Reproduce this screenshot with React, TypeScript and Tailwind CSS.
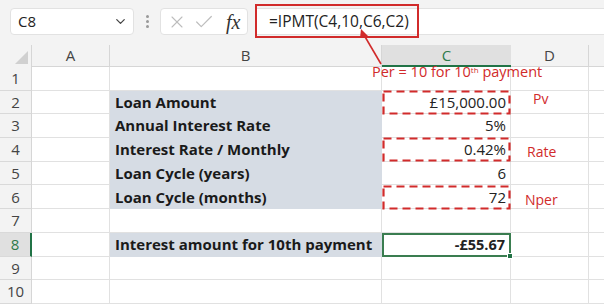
import { ChevronDown, X, Check } from "lucide-react";

const ROW_H = "h-[23.7px]";

const rows = [
  { n: 1, b: "", c: "", shade: false },
  { n: 2, b: "Loan Amount", c: "£15,000.00", shade: true },
  { n: 3, b: "Annual Interest Rate", c: "5%", shade: true },
  { n: 4, b: "Interest Rate / Monthly", c: "0.42%", shade: true },
  { n: 5, b: "Loan Cycle (years)", c: "6", shade: true },
  { n: 6, b: "Loan Cycle (months)", c: "72", shade: true },
  { n: 7, b: "", c: "", shade: false },
  { n: 8, b: "Interest amount for 10th payment", c: "-£55.67", shade: true },
  { n: 9, b: "", c: "", shade: false },
  { n: 10, b: "", c: "", shade: false },
];

const cellFont = { fontFamily: "'Open Sans', 'Liberation Sans', sans-serif" };

function DashedBox({ top }: { top: number }) {
  return (
    <svg
      className="absolute left-[382px] w-[129px] h-[25px] pointer-events-none"
      style={{ top }}
      viewBox="0 0 129 25"
    >
      <rect x="1.5" y="1.5" width="126" height="22" fill="none" stroke="#d12b2b" strokeWidth="2.2" strokeDasharray="8 5" />
    </svg>
  );
}

export default function App() {
  return (
    <div className="relative w-[604px] h-[304px] overflow-hidden bg-[#f3f3f3] text-[#222]" style={{ fontFamily: "'Open Sans', 'Liberation Sans', sans-serif" }}>
      {/* formula bar */}
      <div className="flex items-center h-[45px] pb-[2px]">
        <div className="ml-[10px] w-[124px] h-[27px] bg-white border border-[#e2e2e2] rounded-[4px] flex items-center justify-between pl-[7px] pr-[5px]">
          <span className="text-[15px] text-[#222]">C8</span>
          <ChevronDown className="w-[15px] h-[15px] text-[#444]" strokeWidth={2} />
        </div>
        <div className="w-[26px] flex flex-col items-center gap-[2px]">
          <span className="w-[3px] h-[3px] rounded-full bg-[#999]" />
          <span className="w-[3px] h-[3px] rounded-full bg-[#999]" />
          <span className="w-[3px] h-[3px] rounded-full bg-[#999]" />
        </div>
        <div className="w-[88px] h-[27px] bg-white border border-[#e2e2e2] rounded-[4px] flex items-center pl-[6px] gap-[6px]">
          <X className="w-[20px] h-[20px] text-[#bdbdbd]" strokeWidth={1.3} />
          <Check className="w-[22px] h-[22px] text-[#bdbdbd]" strokeWidth={1.3} />
          <span className="ml-[5px] text-[20px] italic text-[#333]" style={{ fontFamily: "'Liberation Serif', serif" }}>
            fx
          </span>
        </div>
        <div className="ml-[7px] flex-1 h-[27px] bg-white border-y border-l border-[#e2e2e2] flex items-center pl-[13px]">
          <span className="text-[15.5px] text-[#222]">=IPMT(C4,10,C6,C2)</span>
        </div>
      </div>

      {/* column headers */}
      <div className="flex h-[22px] text-[15px] text-[#444]">
        <div className="w-[32px] relative border-r border-[#d6d6d6]">
          <svg className="absolute right-[3px] bottom-[3px]" width="13" height="13" viewBox="0 0 13 13">
            <polygon points="13,0 13,13 0,13" fill="#d0d0d0" />
          </svg>
        </div>
        <div className="w-[78px] flex items-center justify-center border-r border-[#d6d6d6] border-b border-b-[#d6d6d6]">A</div>
        <div className="w-[272px] flex items-center justify-center border-r border-[#d6d6d6] border-b border-b-[#d6d6d6]">B</div>
        <div className="w-[129px] flex items-center justify-center bg-[#e0e0e0] text-[#2f7a4a] border-b-2 border-[#217346]">C</div>
        <div className="w-[78px] flex items-center justify-center border-r border-[#d6d6d6] border-b border-b-[#d6d6d6]">D</div>
        <div className="flex-1 border-b border-[#d6d6d6]" />
      </div>

      {/* grid */}
      <div className="flex flex-col">
        {rows.map((r) => {
          const active = r.n === 8;
          return (
            <div key={r.n} className={`flex ${ROW_H}`}>
              <div
                className={`w-[32px] flex items-center justify-center text-[15px] border-b border-[#d9d9d9] ${
                  active ? "bg-[#e0e0e0] text-[#2f7a4a] border-r-2 border-r-[#217346]" : "text-[#444] border-r border-r-[#d6d6d6]"
                }`}
              >
                {r.n}
              </div>
              <div className="w-[78px] bg-white border-r border-b border-[#e1e1e1]" />
              <div
                className={`w-[272px] flex items-center pl-[5px] text-[15px] font-bold text-[#1a1a1a] border-b ${
                  r.shade ? "bg-[#d6dce4] border-[#d6dce4]" : "bg-white border-r border-[#e1e1e1]"
                }`}
                style={cellFont}
              >
                {r.b}
              </div>
              <div
                className={`w-[129px] flex items-center justify-end pr-[4px] ${
                  active ? "text-[14.5px] font-bold border-2 border-[#3a7d50] relative" : "text-[15px] bg-white border-r border-b border-[#e1e1e1]"
                } bg-white`}
                style={cellFont}
              >
                {r.c}
                {active && <span className="absolute -right-[4px] -bottom-[4px] w-[6px] h-[6px] bg-[#217346] border border-white" />}
              </div>
              <div className="w-[78px] bg-white border-r border-b border-[#e1e1e1]" />
              <div className="flex-1 bg-white border-b border-[#e1e1e1]" />
            </div>
          );
        })}
      </div>

      {/* annotations */}
      <div className="absolute left-[255px] top-[4px] w-[164px] h-[34px] border-2 border-[#d12b2b] pointer-events-none" />
      <svg className="absolute left-0 top-0 pointer-events-none" width="604" height="304">
        <line x1="381" y1="64" x2="364" y2="35" stroke="#d12b2b" strokeWidth="1.6" />
        <polygon points="361,29 368,36 360,38" fill="#d12b2b" />
      </svg>
      <div className="absolute left-[372px] top-[65px] text-[14.5px] text-[#d12b2b] leading-none whitespace-nowrap" style={cellFont}>
        Per = 10 for 10<sup className="text-[8px]">th</sup> payment
      </div>
      <DashedBox top={90} />
      <DashedBox top={137} />
      <DashedBox top={185} />
      <div className="absolute left-[533px] top-[88px] text-[14px] text-[#d12b2b]" style={cellFont}>Pv</div>
      <div className="absolute left-[527px] top-[141px] text-[14px] text-[#d12b2b]" style={cellFont}>Rate</div>
      <div className="absolute left-[525px] top-[189px] text-[14px] text-[#d12b2b]" style={cellFont}>Nper</div>
    </div>
  );
}
